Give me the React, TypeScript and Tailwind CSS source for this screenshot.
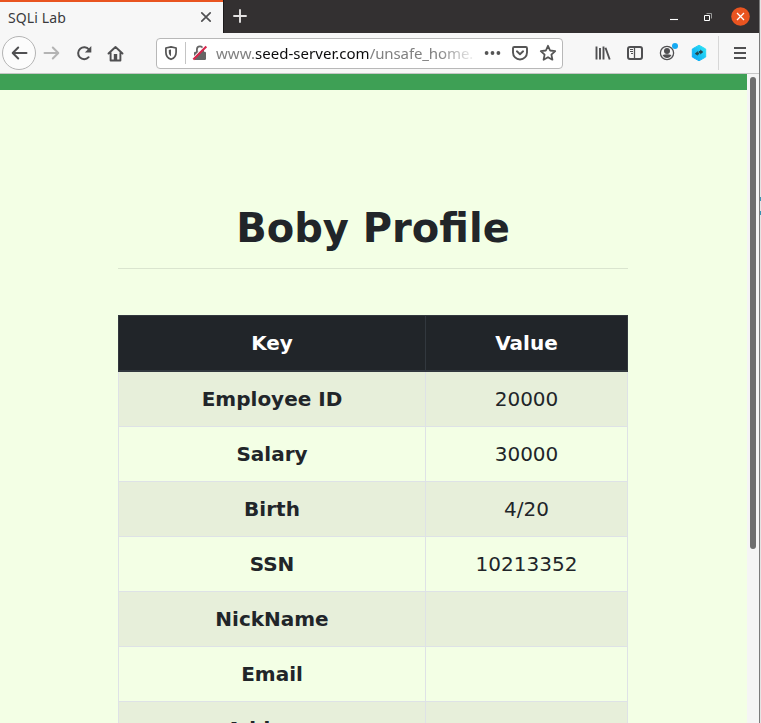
import React from "react";

const rows: [string, string][] = [
  ["Employee ID", "20000"],
  ["Salary", "30000"],
  ["Birth", "4/20"],
  ["SSN", "10213352"],
  ["NickName", ""],
  ["Email", ""],
  ["Address", ""],
];

function TitleBar() {
  return (
    <div className="flex h-[33px] shrink-0 bg-[#333031]">
      <div className="flex h-full w-[223px] items-center justify-between border-t-2 border-[#e95420] bg-[#f7f7f7] pr-[11px] pb-px pl-2 text-[#3a3a3c]">
        <span className="text-[14px] tracking-[0.12px]">SQLi Lab</span>
        <svg width="12" height="12" viewBox="0 0 12 12" stroke="#505052" strokeWidth="1.7" strokeLinecap="round">
          <path d="M1.8 1.8l8.4 8.4M10.2 1.8l-8.4 8.4" />
        </svg>
      </div>
      <div className="flex w-[34px] items-center border-l border-[#1c1a1b] pb-px pl-[9px]">
        <svg width="14" height="14" viewBox="0 0 14 14" stroke="#e4e2e2" strokeWidth="1.9" strokeLinecap="round">
          <path d="M7 1v12M1 7h12" />
        </svg>
      </div>
      <div className="ml-auto flex items-center pr-[9px]">
        <svg width="8" height="8" viewBox="0 0 8 8" className="mr-[26px] translate-x-px">
          <path d="M0 6.5h8" stroke="#fff" strokeWidth="1.1" />
        </svg>
        <svg width="8" height="8" viewBox="0 0 8 8" fill="none" className="mr-[20px] translate-x-px">
          <path d="M2.500.5h5v5" stroke="#999" />
          <path d="M.5 2.500h5v5h-5z" stroke="#fff" />
        </svg>
        <svg width="19" height="19" viewBox="0 0 19 19">
          <circle cx="9.5" cy="9.500" r="9.3" fill="#e95420" />
          <path d="M6 6l7 7M13 6l-7 7" stroke="#fff" strokeWidth="1.3" />
        </svg>
      </div>
    </div>
  );
}

function AddressBar() {
  return (
    <div className="ml-[32px] flex h-[31px] w-[407px] items-center rounded-[4px] border border-[#b8b8b8] bg-white pl-[6px]">
      <svg width="16" height="16" viewBox="0 0 16 16" fill="none" stroke="#555" strokeWidth="1.7">
        <path d="M8 1.800L2.900 3v4.200c0 3.300 1.800 5.900 5.100 7.100 3.300-1.200 5.100-3.800 5.100-7.100V3z" strokeLinejoin="round" />
        <path d="M8 4.600c-.9.200-1.700.300-2.200.500v2.200c0 1.800.800 3.100 2.200 4z" fill="#555" stroke="none" />
      </svg>
      <div className="ml-[6px] h-[22px] w-px bg-[#c4c4c4]" />
      <svg width="16" height="16" viewBox="0 0 16 16" fill="none" className="ml-[6px]">
        <path d="M4.900 7V4.500a3.100 3.100 0 0 1 6.200 0V7" stroke="#666" strokeWidth="1.800" />
        <rect x="2" y="6.700" width="12" height="8.300" rx="1.200" fill="#666" />
        <path d="M.5 13.500L13.500 .5" stroke="#fff" strokeWidth="1.200" />
        <path d="M1.300 14.500L14.300 1.500" stroke="#d7264c" strokeWidth="2.100" />
      </svg>
      <div className="ml-[8px] w-[259px] overflow-hidden text-[15px] whitespace-nowrap text-[#808080] [mask-image:linear-gradient(to_right,black_222px,transparent_262px)]">
        <span className="tracking-[0.05px]">www.</span>
        <span className="tracking-[0.03px] text-[#0c0c0d]">seed-server.com</span>
        <span className="tracking-[-0.1px]">/unsafe_home.</span>
      </div>
      <svg width="17" height="6" viewBox="0 0 17 6" fill="#555" className="ml-[9px]">
        <circle cx="2.600" cy="3" r="1.900" />
        <circle cx="8.500" cy="3" r="1.900" />
        <circle cx="14.400" cy="3" r="1.900" />
      </svg>
      <svg width="16" height="16" viewBox="0 0 16 16" fill="none" stroke="#555" strokeWidth="1.900" strokeLinecap="round" strokeLinejoin="round" className="ml-[11px]">
        <path d="M2.300 2h11.400c.8 0 1.300.5 1.300 1.300V7.500a7 7 0 0 1-14 0V3.300C1 2.500 1.500 2 2.300 2z" />
        <path d="M4.900 6.300L8 9.200l3.100-2.900" />
      </svg>
      <svg width="18" height="18" viewBox="0 0 18 18" fill="none" stroke="#555" strokeWidth="1.800" strokeLinejoin="round" className="ml-[11px]">
        <path d="M9 1.800l2.100 4.700 5.100.6-3.800 3.500 1 5.100L9 13.200l-4.400 2.500 1-5.100-3.800-3.500 5.100-.6z" />
      </svg>
    </div>
  );
}

function Toolbar() {
  return (
    <div className="flex h-[41px] shrink-0 items-center border-b border-[#c6c6c6] bg-[#f7f7f7] pl-[2px]">
      <div className="flex size-[34px] items-center justify-center rounded-full border border-[#b4b4b4] bg-[#fcfcfc]">
        <svg width="17" height="16" viewBox="0 0 17 16" fill="none" stroke="#505052" strokeWidth="2" strokeLinecap="round" strokeLinejoin="round">
          <path d="M15.500 8H2M7.200 2.500L1.700 8l5.500 5.500" />
        </svg>
      </div>
      <svg width="17" height="16" viewBox="0 0 17 16" fill="none" stroke="#b4b4b4" strokeWidth="2" strokeLinecap="round" strokeLinejoin="round" className="ml-[7px]">
        <path d="M1.500 8H15M9.800 2.500l5.500 5.500-5.500 5.500" />
      </svg>
      <svg width="16" height="16" viewBox="0 0 16 16" fill="none" stroke="#505052" strokeWidth="2" strokeLinecap="round" className="ml-[16px]">
        <path d="M12.600 12.200A6 6 0 1 1 12.900 4.500" />
        <path d="M15.300 1v6.400H8.900z" fill="#505052" stroke="none" />
      </svg>
      <svg width="17" height="17" viewBox="0 0 17 17" fill="none" stroke="#505052" strokeWidth="1.900" strokeLinecap="round" strokeLinejoin="round" className="ml-[15px]">
        <path d="M1.500 8.500l7-6.500 7 6.500M3.600 7.500v8h9.800v-8" />
        <path d="M6.800 15V9h3.400v6z" fill="#505052" stroke="none" />
      </svg>
      <AddressBar />
      <svg width="16" height="16" viewBox="0 0 16 16" fill="none" stroke="#505052" strokeWidth="1.900" className="ml-[32px]">
        <path d="M1.500 1.500v13M5 3v11.500M8.500 1.500v13M10.500 2.700l4.200 11.800" />
      </svg>
      <svg width="16" height="16" viewBox="0 0 16 16" fill="none" stroke="#505052" className="ml-[16px]">
        <rect x="1" y="2" width="14" height="12" rx="2" strokeWidth="2" />
        <path d="M7.500 2v12" strokeWidth="1.300" />
        <path d="M3 4.500h3M3 6.500h3M4 8.500h2" strokeWidth="1" />
      </svg>
      <svg width="20" height="20" viewBox="0 0 20 20" fill="none" className="ml-[16px]">
        <circle cx="8" cy="10" r="6.600" stroke="#505052" strokeWidth="1.300" />
        <circle cx="8" cy="8.100" r="3" fill="#505052" />
        <path d="M3.500 12c2.500-1 6.500-1 9 0-1 2-2.500 3-4.500 3s-3.500-1-4.500-3z" fill="#505052" />
        <circle cx="16" cy="3" r="3" fill="#15a9f2" />
      </svg>
      <svg width="16" height="18" viewBox="0 0 16 18" className="ml-[12px]">
        <defs>
          <linearGradient id="hex" x1="0" y1="1" x2="1" y2="0">
            <stop offset="0" stopColor="#07a0f5" />
            <stop offset="1" stopColor="#30e8f4" />
          </linearGradient>
        </defs>
        <path d="M8 1.200l6.700 3.800v8L8 16.800 1.300 13V5z" fill="url(#hex)" stroke="url(#hex)" strokeLinejoin="round" />
        <path d="M3.800 9.800l3-2.800v1.400h1.400v2H6.800v1.400zM12.300 8L9.200 5.400v1.500H7.800v2h1.400v1.500z" fill="#26464d" />
      </svg>
      <div className="ml-[11px] h-[34px] w-px bg-[#d7d7d7]" />
      <svg width="14" height="14" viewBox="0 0 14 14" stroke="#505052" strokeWidth="2" className="ml-[14px]">
        <path d="M1 2h12M1 7h12M1 12h12" />
      </svg>
    </div>
  );
}

function ProfileTable() {
  return (
    <div className="mt-[46px] text-center text-[20px] text-[#212529]">
      <div className="grid h-[57px] grid-cols-[307px_1fr] border border-b-2 border-[#32383e] bg-[#212529] font-bold text-white">
        <div className="flex items-center justify-center border-r border-[#32383e]">Key</div>
        <div className="flex items-center justify-center">Value</div>
      </div>
      {rows.map(([key, value], i) => (
        <div
          key={key}
          className={
            "grid h-[55px] grid-cols-[307px_1fr] border-x border-b border-[#dee2e6] " + (i % 2 === 0 ? "bg-[#e7efda]" : "")
          }
        >
          <div className="flex items-center justify-center border-r border-[#dee2e6] font-bold">{key}</div>
          <div className="flex items-center justify-center">{value}</div>
        </div>
      ))}
    </div>
  );
}

export default function App() {
  return (
    <div className="flex h-[723px] w-[761px] overflow-hidden bg-[#e4e4e4]">
      <div className="flex w-[759px] flex-col font-['Noto_Sans',sans-serif]">
        <TitleBar />
        <Toolbar />
        <div className="flex min-h-0 flex-1">
          <main className="w-[747px] overflow-hidden bg-[#f3ffe5] font-['DejaVu_Sans',sans-serif]">
            <div className="h-4 bg-[#3ea055]" />
            <div className="mt-[114px] ml-[118px] w-[510px]">
              <h1 className="h-[64px] text-center text-[40px] leading-[48px] font-bold text-[#212529]">Boby Profile</h1>
              <div className="h-px bg-[#dae5cf]" />
              <ProfileTable />
            </div>
          </main>
          <div className="w-3 bg-[#f5f5f5] pt-[3px] pl-[3px]">
            <div className="h-[472px] w-[6px] rounded-full bg-[#6e6e6e]" />
          </div>
        </div>
      </div>
      <div className="w-px bg-[#7b7b7b]" />
      <div className="w-px pt-[197px]">
        <div className="h-[4px] bg-[#3795b5]" />
        <div className="mt-[10px] h-[4px] bg-[#3795b5]" />
      </div>
    </div>
  );
}
